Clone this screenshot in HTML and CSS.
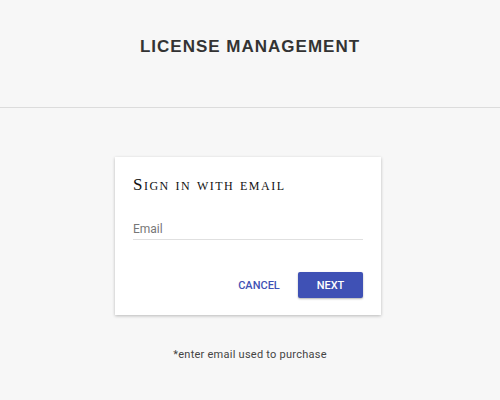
FILE: index.html
```html
<!DOCTYPE html>
<html>
<head>
<meta charset="utf-8">
<link rel="stylesheet" href="styles.css">
</head>
<body>
<header class="header">
  <h1 class="title">LICENSE MANAGEMENT</h1>
</header>
<main class="main">
  <div class="card">
    <h2 class="card-title">Sign in with email</h2>
    <div class="field">
      <span class="field-label">Email</span>
    </div>
    <div class="actions">
      <button class="btn btn-flat">CANCEL</button>
      <button class="btn btn-raised">NEXT</button>
    </div>
  </div>
  <p class="note">*enter email used to purchase</p>
</main>
</body>
</html>
```
FILE: styles.css
```css
html, body {
  margin: 0;
  padding: 0;
  background: #f7f7f7;
  font-family: "Roboto", "Liberation Sans", sans-serif;
}
.header {
  height: 107px;
  border-bottom: 1px solid #dcdcdc;
  display: flex;
  justify-content: center;
  align-items: flex-start;
}
.title {
  margin: 36px 0 0;
  font-family: "Liberation Sans", sans-serif;
  font-weight: bold;
  font-size: 17px;
  letter-spacing: 1px;
  color: #333;
  line-height: 22px;
}
.main {
  display: flex;
  flex-direction: column;
  align-items: center;
  padding-top: 49px;
}
.card {
  width: 266px;
  height: 158px;
  box-sizing: border-box;
  background: #fff;
  box-shadow: 0 1px 3px rgba(0,0,0,0.25);
  padding: 18px 18px 0;
  margin-right: 4px;
}
.card-title {
  margin: 0;
  font-family: "Liberation Serif", serif;
  font-weight: normal;
  font-variant: small-caps;
  font-size: 17px;
  letter-spacing: 1.5px;
  color: #111;
  line-height: 20px;
}
.field {
  margin-top: 24px;
  border-bottom: 1px solid #e0e0e0;
  height: 21px;
  display: flex;
  align-items: flex-end;
  padding-bottom: 3px;
  box-sizing: border-box;
}
.field-label {
  font-size: 12px;
  color: #777;
  line-height: 14px;
}
.actions {
  display: flex;
  justify-content: flex-end;
  align-items: center;
  gap: 18px;
  margin-top: 32px;
}
.btn {
  font-family: "Roboto", sans-serif;
  font-weight: 500;
  font-size: 11px;
  border: none;
  padding: 0;
  cursor: pointer;
}
.btn-flat {
  background: transparent;
  color: #3f51b5;
  width: 42px;
  height: 26px;
}
.btn-raised {
  background: #3f51b5;
  color: #fff;
  width: 65px;
  height: 26px;
  border-radius: 2px;
  box-shadow: 0 1px 2px rgba(0,0,0,0.3);
}
.note {
  margin: 33px 0 0;
  font-size: 11px;
  letter-spacing: 0.25px;
  color: #444;
  line-height: 14px;
}
```
